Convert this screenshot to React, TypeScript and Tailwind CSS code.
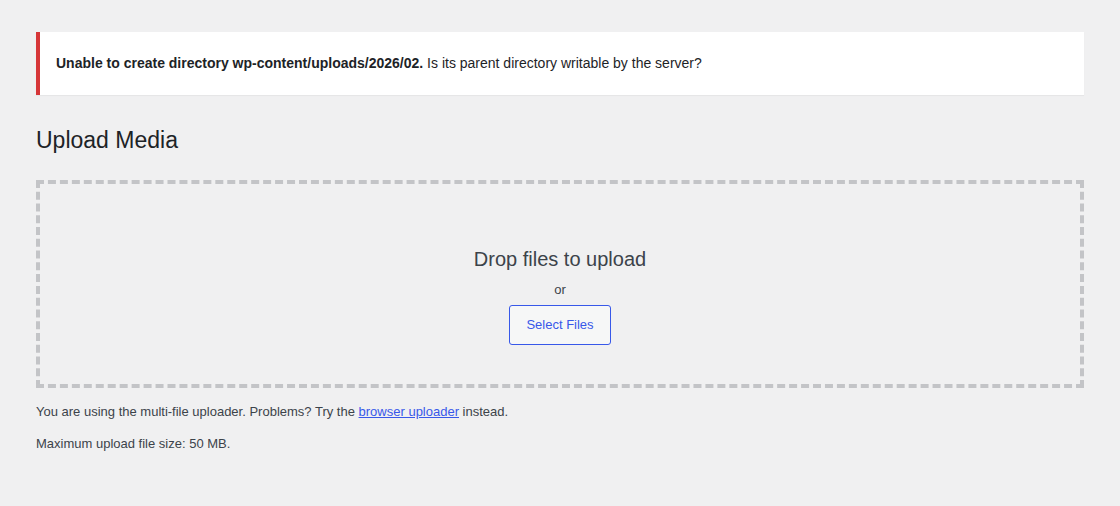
export default function App() {
  return (
    <div className="min-h-[506px] w-full bg-[#f0f0f1] px-9 pt-8 font-['Liberation_Sans',Arial,sans-serif] text-[13px] text-[#3c434a]">
      <div className="flex h-[63px] items-center border-l-4 border-[#d63638] bg-white pl-4 shadow-[0_1px_1px_rgba(0,0,0,0.04)] text-[#1d2327]">
        <p className="text-[14px]">
          <strong>Unable to create directory wp-content/uploads/2026/02.</strong> Is its parent directory writable by the server?
        </p>
      </div>

      <h1 className="mt-[30px] text-[23px] leading-[30px] text-[#1d2327]">Upload Media</h1>

      <div className="mt-[25px] flex h-[208px] flex-col items-center border-4 border-dashed border-[#c3c4c7] pt-[60px]">
        <p className="text-[20px] leading-[30px] text-[#3c434a]">Drop files to upload</p>
        <p className="mt-[6px] text-[13px] leading-[20px]">or</p>
        <button className="mt-[5px] h-[40px] w-[102px] rounded-[3px] border border-[#3858e9] bg-[#f6f7f7] text-[13px] text-[#3858e9]">
          Select Files
        </button>
      </div>

      <p className="mt-[14px] leading-[20px]">
        You are using the multi-file uploader. Problems? Try the{" "}
        <a href="#" className="text-[#3858e9] underline">browser uploader</a> instead.
      </p>
      <p className="mt-[12px] leading-[20px]">Maximum upload file size: 50 MB.</p>
    </div>
  );
}
